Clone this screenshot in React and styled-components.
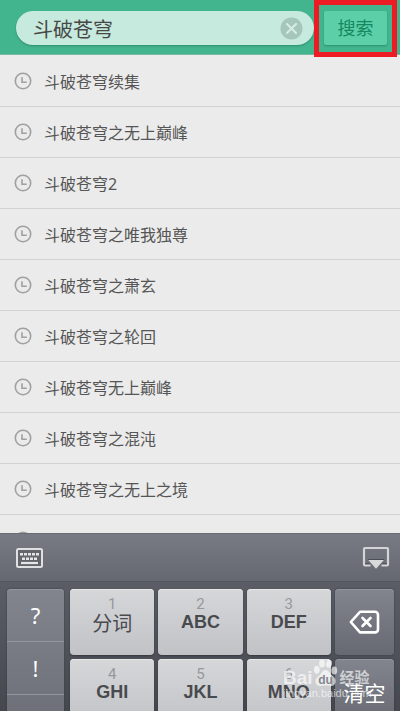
import React, { useState } from 'react';
import styled, { createGlobalStyle } from 'styled-components';

const GlobalStyle = createGlobalStyle`
  * {
    box-sizing: border-box;
  }
  body {
    margin: 0;
    background: #ebebeb;
    font-family: "Noto Sans", "Noto Sans CJK SC", sans-serif;
  }
  button, input {
    font-family: inherit;
    border: 0;
    padding: 0;
    margin: 0;
  }
`

const Page = styled.div`
  display: flex;
  flex-direction: column;
  height: 100vh;
  overflow: hidden;
`

const Header = styled.form`
  position: relative;
  flex: none;
  display: flex;
  align-items: center;
  gap: 10px;
  padding: 11px 13px 9px 16px;
  background: #43b58e;
  border-bottom: 1px solid #79b8a2;
`

const SearchBox = styled.div`
  flex: 1;
  min-width: 0;
  display: flex;
  align-items: center;
  height: 34px;
  padding: 0 11px 0 17px;
  border-radius: 17px;
  background: #c6eadd;
  box-shadow: 0 1px 2px #2c8f6d;
`

const SearchInput = styled.input`
  flex: 1;
  min-width: 0;
  height: 34px;
  background: transparent;
  outline: none;
  font-size: 20px;
  color: #484848;
`

const ClearButton = styled.button`
  display: flex;
  background: none;
`

const SearchButton = styled.button`
  flex: none;
  width: 63px;
  height: 34px;
  border-radius: 2px;
  background: #5ccfa8;
  box-shadow: 0 1px 2px #2c8f6d;
  font-size: 18px;
  line-height: 34px;
  color: #14885f;
`

const Highlight = styled.div`
  position: absolute;
  top: 0;
  right: 3px;
  width: 83px;
  height: 57px;
  border: 5px solid #ed1c24;
  pointer-events: none;
`

const History = styled.ul`
  flex: 1;
  min-height: 0;
  overflow: hidden;
  margin: 0;
  padding: 1px 0 0;
  list-style: none;
`

const HistoryItem = styled.li`
  border-bottom: 1px solid #d2d2d2;
`

const HistoryButton = styled.button`
  display: flex;
  align-items: center;
  gap: 12px;
  width: 100%;
  height: 50px;
  padding: 0 14px;
  background: none;
  font-size: 16px;
  color: #555;
`

const Keyboard = styled.section`
  position: relative;
  flex: none;
  height: 25vh;
  min-height: 178px;
  overflow: hidden;
  background: linear-gradient(#62656d, #45484f);
`

const Toolbar = styled.div`
  display: flex;
  align-items: center;
  justify-content: space-between;
  height: 49px;
  padding: 0 10px 0 15px;
  background: linear-gradient(#787b83, #656870);
  border-top: 1px solid #696c72;
  border-bottom: 1px solid #52555c;
`

const ToolButton = styled.button`
  display: flex;
  background: none;
`

const Keys = styled.div`
  display: grid;
  grid-template-columns: 59fr 84fr 84fr 84fr 59fr;
  grid-auto-rows: 66px;
  gap: 4px;
  padding: 7px 6px 0 7px;
`

const Punctuation = styled.div`
  grid-row: span 3;
  margin-right: 2px;
  border-radius: 4px;
  overflow: hidden;
  background: linear-gradient(#82858d, #60636b);
  box-shadow: 0 0 2px #363940, inset 0 1px 0 #92959c;
`

const PunctuationKey = styled.button`
  display: block;
  width: 100%;
  height: 53px;
  border-bottom: 1px solid #92959c;
  background: none;
  font-size: 22px;
  line-height: 50px;
  color: #fff;
`

const Key = styled.button`
  display: flex;
  flex-direction: column;
  align-items: center;
  padding-top: 7px;
  border-radius: 4px;
  background: linear-gradient(#d6d7d9, #c1c2c6);
  box-shadow: 0 1px 2px #34373e, inset 0 1px 0 #e6e7e9;
`

const KeyNumber = styled.span`
  font-family: Roboto, sans-serif;
  font-size: 15px;
  line-height: 16px;
  color: #97989c;
`

const KeyLabel = styled.span`
  font-family: "Liberation Sans", "Noto Sans CJK SC", sans-serif;
  font-size: ${props => props.$plain ? 20 : 18}px;
  font-weight: ${props => props.$plain ? 400 : 700};
  line-height: ${props => props.$plain ? 24 : 20}px;
  color: #484a4e;
`

const ActionKey = styled.button`
  display: flex;
  align-items: center;
  justify-content: center;
  border-radius: 4px;
  background: linear-gradient(#82858d, #666971);
  box-shadow: 0 0 2px #34373e, inset 0 1px 0 #92959c;
  font-size: 21px;
  color: #fff;
`

const Watermark = styled.div`
  position: absolute;
  right: 29px;
  bottom: 11px;
  width: 88px;
  color: rgba(255, 255, 255, .65);
  pointer-events: none;
`

const Brand = styled.div`
  display: flex;
  align-items: flex-end;
  font-family: "Liberation Sans", "Noto Sans CJK SC", sans-serif;
  font-size: 19px;
  font-weight: 700;
  line-height: 18px;
`

const BrandSuffix = styled.span`
  margin-left: 2px;
  font-size: 15px;
`

const Site = styled.div`
  font-family: "Liberation Sans", sans-serif;
  font-size: 11px;
  line-height: 13px;
`

const ClockIcon = () => (
  <svg width="18" height="18" viewBox="0 0 18 18" fill="none" stroke="#a0a0a0" strokeWidth="1.6">
    <circle cx="9" cy="9" r="7.7" />
    <path d="M8 5.300v4.900h4.800" />
  </svg>
)

const ClearIcon = () => (
  <svg width="23" height="23" viewBox="0 0 23 23">
    <circle cx="11.5" cy="11.5" r="11" fill="#a5c6ba" />
    <path d="M7 7l9 9M16 7l-9 9" stroke="#d5ebe3" strokeWidth="2.2" strokeLinecap="round" />
  </svg>
)

const KeyboardIcon = () => (
  <svg width="28" height="22" viewBox="0 0 28 22">
    <rect x="2" y="2" width="25" height="18" rx="1.5" fill="#62656c" stroke="#dfe0e2" strokeWidth="2" />
    <path d="M5 7.2h19" stroke="#e4e5e7" strokeWidth="2.4" strokeDasharray="3 1" />
    <path d="M7 11.7h15" stroke="#e4e5e7" strokeWidth="2.4" strokeDasharray="3 1" />
    <path d="M6 16h17" stroke="#e4e5e7" strokeWidth="2.2" />
  </svg>
)

const HideIcon = () => (
  <svg width="28" height="26" viewBox="0 0 28 26">
    <path d="M8.5 20.500H3a1 1 0 0 1-1-1V4a1 1 0 0 1 1-1h22a1 1 0 0 1 1 1v15.500a1 1 0 0 1-1 1h-5.500" fill="none" stroke="#d3d4d7" strokeWidth="2.2" />
    <path d="M3.200 18.600h4.600M20.200 18.600h4.600" stroke="#4f525a" />
    <path d="M6.300 15h15.600L14 23.800z" fill="#d8d9db" />
    <path d="M6.300 14.500h15.600" stroke="#4a4d54" />
  </svg>
)

const BackspaceIcon = () => (
  <svg width="31" height="24" viewBox="0 0 31 24" fill="none" stroke="#fff" strokeWidth="2.6" strokeLinejoin="round" strokeLinecap="round">
    <path d="M11 1.800H26a3 3 0 0 1 3 3v14.600a3 3 0 0 1-3 3H11L1.800 12z" />
    <path d="M13.500 8l8 8M21.500 8l-8 8" />
  </svg>
)

const PawIcon = () => (
  <svg width="25" height="28" viewBox="0 0 25 28" fill="currentColor">
    <ellipse cx="3.8" cy="10.8" rx="2.9" ry="4" />
    <ellipse cx="9" cy="4.5" rx="2.9" ry="4" />
    <ellipse cx="16" cy="4.8" rx="2.9" ry="4" transform="rotate(12 16 4.8)" />
    <ellipse cx="21.3" cy="11.5" rx="2.9" ry="4" />
    <path d="M12.5 11c3 0 4.500 3.500 7 5.800 2.500 2.200 3.700 4 3 6.700-.7 3-3.500 3.800-6 3.300-2.800-.5-5.200-.5-8 0-3 .5-5.500-.6-6-3.500-.4-2.800 1-4.500 3.500-6.500C8.500 14.800 9.500 11 12.500 11z" />
    <text x="12.5" y="24.5" textAnchor="middle" fontFamily="Liberation Sans" fontWeight="700" fontSize="12" fill="#85888f">du</text>
  </svg>
)

const history = [
  '斗破苍穹续集',
  '斗破苍穹之无上巅峰',
  '斗破苍穹2',
  '斗破苍穹之唯我独尊',
  '斗破苍穹之萧玄',
  '斗破苍穹之轮回',
  '斗破苍穹无上巅峰',
  '斗破苍穹之混沌',
  '斗破苍穹之无上之境'
];

const LetterKey = ({ number, label, plain }) => (
  <Key type="button">
    <KeyNumber>{number}</KeyNumber>
    <KeyLabel $plain={plain}>{label}</KeyLabel>
  </Key>
)

const App = () => {
  const [query, setQuery] = useState('斗破苍穹');
  return (
    <Page>
      <GlobalStyle />
      <Header onSubmit={(e) => e.preventDefault()}>
        <SearchBox>
          <SearchInput aria-label="搜索" value={query} onChange={(e) => setQuery(e.target.value)} />
          <ClearButton type="button" aria-label="清空" onClick={() => setQuery('')}>
            <ClearIcon />
          </ClearButton>
        </SearchBox>
        <SearchButton type="submit">搜索</SearchButton>
        <Highlight />
      </Header>
      <History>
        {history.map((item) => (
          <HistoryItem key={item}>
            <HistoryButton type="button" onClick={() => setQuery(item)}>
              <ClockIcon />
              {item}
            </HistoryButton>
          </HistoryItem>
        ))}
        <HistoryItem>
          <HistoryButton type="button" aria-label="斗破苍穹">
            <ClockIcon />
          </HistoryButton>
        </HistoryItem>
      </History>
      <Keyboard>
        <Toolbar>
          <ToolButton type="button" aria-label="键盘"><KeyboardIcon /></ToolButton>
          <ToolButton type="button" aria-label="收起"><HideIcon /></ToolButton>
        </Toolbar>
        <Keys>
          <Punctuation>
            <PunctuationKey type="button">?</PunctuationKey>
            <PunctuationKey type="button">!</PunctuationKey>
          </Punctuation>
          <LetterKey number="1" label="分词" plain />
          <LetterKey number="2" label="ABC" />
          <LetterKey number="3" label="DEF" />
          <ActionKey type="button" aria-label="删除"><BackspaceIcon /></ActionKey>
          <LetterKey number="4" label="GHI" />
          <LetterKey number="5" label="JKL" />
          <LetterKey number="6" label="MNO" />
          <ActionKey type="button">清空</ActionKey>
        </Keys>
        <Watermark>
          <Brand>
            Bai
            <PawIcon />
            <BrandSuffix>经验</BrandSuffix>
          </Brand>
          <Site>jingyan.baidu.com</Site>
        </Watermark>
      </Keyboard>
    </Page>
  )
}

export default App;
